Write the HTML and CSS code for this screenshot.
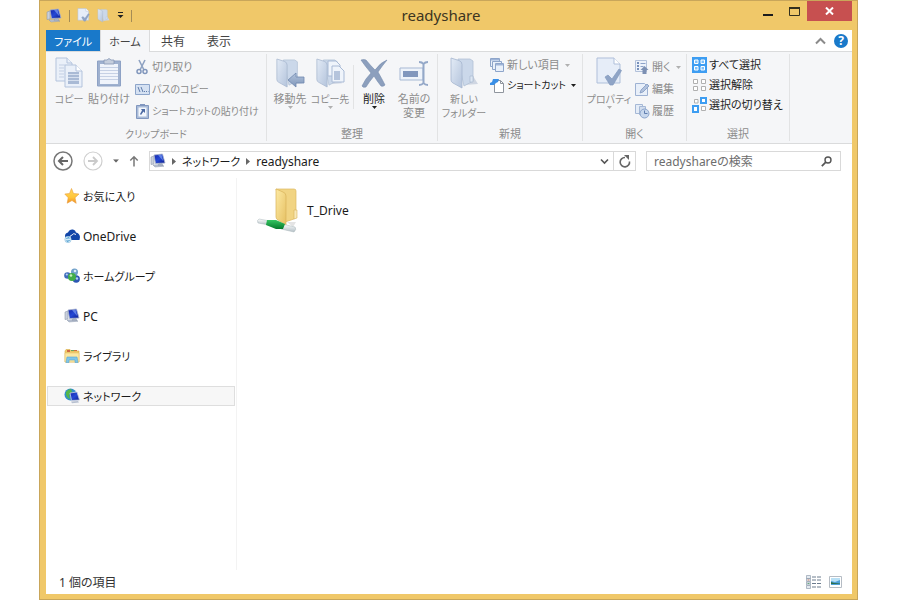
FILE: index.html
```html
<!DOCTYPE html>
<html lang="ja">
<head>
<meta charset="utf-8">
<meta name="viewport" content="width=device-width, initial-scale=1">
<title>readyshare</title>
<link rel="stylesheet" href="styles.css">
</head>
<body>
<svg class="defs" width="0" height="0" aria-hidden="true">
  <defs>
    <linearGradient id="g-screen" x1="0" y1="0" x2="1" y2="1"><stop offset="0" stop-color="#1426a8"/><stop offset=".5" stop-color="#2448d4"/><stop offset="1" stop-color="#0c1c8c"/></linearGradient>
    <linearGradient id="g-pale" x1="0" y1="0" x2="1" y2="1"><stop offset="0" stop-color="#e3ebf6"/><stop offset="1" stop-color="#b4c4dc"/></linearGradient>
    <linearGradient id="g-arrow" x1="0" y1="0" x2="0" y2="1"><stop offset="0" stop-color="#b3c4dd"/><stop offset="1" stop-color="#7f96b9"/></linearGradient>
    <linearGradient id="g-yellow" x1="0" y1="0" x2="1" y2="1"><stop offset="0" stop-color="#fdeaa4"/><stop offset="1" stop-color="#e6c062"/></linearGradient>
    <linearGradient id="g-star" x1="0" y1="0" x2="0" y2="1"><stop offset="0" stop-color="#ffd85c"/><stop offset=".6" stop-color="#ffc63a"/><stop offset="1" stop-color="#f08c28"/></linearGradient>
    <linearGradient id="g-pipe" x1="0" y1="0" x2="0" y2="1"><stop offset="0" stop-color="#ffffff"/><stop offset="1" stop-color="#b4c0c6"/></linearGradient>
    <linearGradient id="g-green" x1="0" y1="0" x2="0" y2="1"><stop offset="0" stop-color="#35c562"/><stop offset="1" stop-color="#057a2c"/></linearGradient>
    <symbol id="pc" viewBox="0 0 16 16">
      <path d="M1 4l3-1v8l-3 .5z" fill="#c9d0dc" stroke="#8d99ad" stroke-width=".6"/>
      <path d="M4 2l8.500-1 2.500 9-9.500.5z" fill="url(#g-screen)" stroke="#a9b4cc" stroke-width=".8"/>
      <path d="M8 2l3.500-.3 1.800 6.500z" fill="#7d9cf0" opacity=".7"/>
      <path d="M9 10.500h3l1 2H8zM3 12l8-.5 3 1.700-9 .8z" fill="#b9c2d2" stroke="#8e9aaf" stroke-width=".5"/>
    </symbol>
    <symbol id="folder-pale" viewBox="0 0 30 32">
      <path d="M16 28l13-1-5-8z" fill="#cfd6e2"/>
      <path d="M9 2h12l3 2v20l-9 5z" fill="#cbd8ea" stroke="#b3c1d6" stroke-width=".8"/>
      <path d="M2 1l8 2.500q3 1 3 4V31l-9-5q-2-1-2-3z" fill="url(#g-pale)" stroke="#a6b6cf" stroke-width=".8"/>
      <path d="M21 19h3v6h-3z" fill="#dce6f3" stroke="#a6b6cf" stroke-width=".6"/>
    </symbol>
    <symbol id="page-check" viewBox="0 0 26 32">
      <path d="M1 1h17l6 6v19H1z" fill="#e6edf8" stroke="#afbfda"/>
      <path d="M18 1v6h6" fill="#fff" stroke="#afbfda"/>
      <path d="M9 20l3-2 4 4 7-10 2.500 1.500L17 28h-3z" fill="#8fa4c6" stroke="#8399bd" stroke-width=".7"/>
    </symbol>
    <symbol id="caret" viewBox="0 0 5 3"><path d="M0 0h5L2.500 3z" fill="currentColor"/></symbol>
  </defs>
</svg>

<div class="window">
  <header class="titlebar">
    <div class="quick">
      <svg width="16" height="16"><use href="#pc"/></svg>
      <span class="quick-line"></span>
      <button class="quick-btn" aria-label="プロパティ"><svg width="13" height="15"><use href="#page-check"/></svg></button>
      <button class="quick-btn" aria-label="新しいフォルダー"><svg width="13" height="15"><use href="#folder-pale"/></svg></button>
      <button class="quick-btn" aria-label="カスタマイズ"><svg width="7" height="7" viewBox="0 0 7 7"><path d="M1 0h5v1H1zM.5 3h6L3.500 6z" fill="#222"/></svg></button>
      <span class="quick-line"></span>
    </div>
    <h1 class="title">readyshare</h1>
    <div class="caption">
      <button class="cap-btn" aria-label="最小化"><svg width="12" height="12" viewBox="0 0 12 12"><path d="M1 9h10v2H1z" fill="#1c1c1c"/></svg></button>
      <button class="cap-btn" aria-label="最大化"><svg width="13" height="12" viewBox="0 0 13 12"><path d="M1.500 2.500h10v8h-10z" fill="none" stroke="#33301f"/><path d="M1 2h11v2H1z" fill="#33301f"/></svg></button>
      <button class="cap-btn close" aria-label="閉じる"><svg width="9" height="8" viewBox="0 0 9 8"><path d="M1 .5l7 7M8 .5l-7 7" stroke="#fff" stroke-width="2"/></svg></button>
    </div>
  </header>

  <div class="client">
    <nav class="tabs">
      <button class="tab file">ファイル</button>
      <button class="tab active">ホーム</button>
      <button class="tab">共有</button>
      <button class="tab">表示</button>
      <span class="tab-tools">
        <button class="icon-btn" aria-label="リボンの最小化"><svg width="11" height="8" viewBox="0 0 11 8"><path d="M1 6.500l4.500-4.500L10 6.500" fill="none" stroke="#8a8a8a" stroke-width="2"/></svg></button>
        <button class="icon-btn help" aria-label="ヘルプ">?</button>
      </span>
    </nav>

    <section class="ribbon">
      <div class="group clip">
        <div class="tools">
          <button class="big"><svg width="28" height="32" viewBox="0 0 28 32"><g stroke="#b3c3dc" fill="#eaf0f9"><path d="M1 1h11l5 5v18H1z"/><path d="M12 1v5h5"/><path d="M10 8h11l6 6v16H10z"/><path d="M21 8v6h6" fill="#fff"/></g><path d="M4 8h6M4 11h5M4 14h5M4 17h5M4 20h5" stroke="#c3cfe3"/><path d="M13 15h11v12H13z" fill="#a9bad5"/><path d="M13 17.500h11M13 20.500h11M13 23.500h11" stroke="#d5dfee"/></svg><span class="kana">コピー</span></button>
          <button class="big"><svg width="26" height="32" viewBox="0 0 26 32"><path d="M1.500 4h23v25h-23z" fill="#9fb1cf" stroke="#8ea2c5"/><path d="M4 7h18v20H4z" fill="#f0f4fb"/><path d="M4 10.500h18M4 13.500h18M4 16.500h18M4 19.500h18M4 22.500h18" stroke="#c6d1e5"/><path d="M8 3h3q2-3 4 0h3v4H8z" fill="#c5cedd" stroke="#8798b5" stroke-width=".8"/></svg><span>貼り付け</span></button>
          <div class="stack wide">
            <button class="small"><svg width="15" height="16" viewBox="0 0 15 16"><path d="M4 1l5 10M10 1L5 11" stroke="#8ea2c2" stroke-width="1.600" fill="none"/><g fill="none" stroke="#8197bc" stroke-width="1.500"><circle cx="4" cy="12.500" r="2"/><circle cx="10" cy="12.500" r="2"/></g></svg>切り取り</button>
            <button class="small kana"><svg width="15" height="16" viewBox="0 0 15 16"><path d="M.5 3.500h14v10H.5z" fill="#d5e1f2" stroke="#8da5ca"/><path d="M3 6l2 5M6 6l2 5M9 10.500h1M11 10.500h1M13 10.500h.5" stroke="#5f7cab" fill="none"/></svg>パスのコピー</button>
            <button class="small kana"><svg width="15" height="16" viewBox="0 0 15 16"><path d="M1.500 2.500h12v13h-12z" fill="#a9bbd8" stroke="#8197bf"/><path d="M3.500 4.500h8v9h-8z" fill="#f3f7fd"/><path d="M5 1h5v2H5z" fill="#8197bf"/><path d="M6 6h4v4L8.500 8.500 6 12l-1-1 2-3.500z" fill="#4c69a3"/></svg>ショートカットの貼り付け</button>
          </div>
        </div>
        <div class="caption-text kana">クリップボード</div>
      </div>

      <div class="group organize">
        <div class="tools">
          <button class="big"><svg width="30" height="32" viewBox="0 0 30 32"><use href="#folder-pale" width="28" height="32"/><path d="M13 23l8-7v4h8v6h-8v4z" fill="url(#g-arrow)" stroke="#7088ae" stroke-width=".8"/></svg><span>移動先</span><svg class="drop" width="5" height="3"><use href="#caret"/></svg></button>
          <button class="big"><svg width="30" height="32" viewBox="0 0 30 32"><use href="#folder-pale" width="28" height="32"/><g fill="#eff4fb" stroke="#a9bad5"><path d="M13 4h8l4 4v11H13z"/><path d="M17 9h7l5 5v11H17z"/></g><path d="M19 14h6v9h-6z" fill="#b5c4dc"/></svg><span class="kana">コピー先</span><svg class="drop" width="5" height="3"><use href="#caret"/></svg></button>
          <span class="split"></span>
          <button class="big on"><svg width="30" height="32" viewBox="0 0 30 32"><path d="M2 3q3-1 5 0 4 5 9 10 6-8 12-10-5 6-9 12 4 7 7 13-2 2-4 1-4-5-7-10-5 6-8 11-3 1-4-1 3-7 9-13Q6 9 2 3z" fill="#8c9fbd" stroke="#768bac" stroke-width=".6"/></svg><span>削除</span><svg class="drop" width="5" height="3"><use href="#caret"/></svg></button>
          <button class="big"><svg width="30" height="32" viewBox="0 0 30 32"><path d="M1 11h23v12H1z" fill="#eef3fa" stroke="#a7b9d4"/><path d="M4 14h15v6H4z" fill="#8197bd"/><path d="M20 5q3 0 4.500 2Q26 5 29 5M24.500 6v21M20 28q3 0 4.500-2 1.500 2 4.500 2" fill="none" stroke="#94a8c8" stroke-width="2"/></svg><span>名前の<br>変更</span></button>
        </div>
        <div class="caption-text">整理</div>
      </div>

      <div class="group create">
        <div class="tools">
          <button class="big"><svg width="30" height="32"><use href="#folder-pale"/></svg><span class="kana">新しい<br>フォルダー</span></button>
          <div class="stack tight">
            <button class="small"><svg width="15" height="16" viewBox="0 0 15 16"><g fill="#e9f0fa" stroke="#8ea5ca"><path d="M.5 1.500h9v8h-9z"/><path d="M2.500 4.500h9v8h-9z"/><path d="M5.500 6.500h8v8h-8z"/></g><path d="M1 2h8v1.500H1zM6 7h7v1.500H6z" fill="#9eb4d8"/></svg>新しい項目<svg class="drop" width="5" height="3"><use href="#caret"/></svg></button>
            <button class="small on kana"><svg width="15" height="16" viewBox="0 0 15 16"><path d="M4.500 3.500h6l3 3v9h-9z" fill="#fff" stroke="#8f959e"/><path d="M10.500 3.500v3h3" fill="none" stroke="#8f959e"/><path d="M0 6l2-1 1-3h6L8 5 6 6 4 8H0z" fill="#3a8fe6"/></svg>ショートカット<svg class="drop" width="5" height="3"><use href="#caret"/></svg></button>
          </div>
        </div>
        <div class="caption-text">新規</div>
      </div>

      <div class="group open">
        <div class="tools">
          <button class="big"><svg width="26" height="32"><use href="#page-check"/></svg><span class="kana">プロパティ</span><svg class="drop" width="5" height="3"><use href="#caret"/></svg></button>
          <div class="stack wide">
            <button class="small"><svg width="15" height="16" viewBox="0 0 15 16"><path d="M.5 1.500h11v11H.5z" fill="#edf2fa" stroke="#b2c1da"/><path d="M2 3h2v2H2zM2 6h2v2H2zM2 9h2v2H2z" fill="#7790bb"/><path d="M5.500 4.500h5M5.500 7.500h3" stroke="#8ca2c8"/><path d="M5.500 11L9.500 7l4 4h-2v4h-4v-4z" fill="#7c90b3"/></svg>開く<svg class="drop" width="5" height="3"><use href="#caret"/></svg></button>
            <button class="small"><svg width="15" height="16" viewBox="0 0 15 16"><path d="M.5 2.500h9l3 3v9H.5z" fill="#e8eff9" stroke="#9eb2d3"/><path d="M5 12l1-3 6-6 2 2-6 6z" fill="#b1c2dd" stroke="#8299c0" stroke-width=".8"/></svg>編集</button>
            <button class="small"><svg width="15" height="16" viewBox="0 0 15 16"><path d="M.5 1.500h7v9h-7z" fill="#e4ecf7" stroke="#a5b8d6"/><path d="M4.500 3.500h6v8h-6z" fill="#d1ddee" stroke="#a5b8d6"/><circle cx="9.500" cy="10.500" r="4.500" fill="#c7d7ed" stroke="#8ba4cc"/><path d="M9.500 7.500v3h3" fill="none" stroke="#5f7dae"/></svg>履歴</button>
          </div>
        </div>
        <div class="caption-text">開く</div>
      </div>

      <div class="group select">
        <div class="tools">
          <div class="stack tight">
            <button class="small on"><svg width="15" height="16" viewBox="0 0 15 16"><path d="M0 0h15v16H0z" fill="#3d9df2"/><path d="M2.500 3h3.500v3.500H2.500zM9 3h3.500v3.500H9zM2.500 9.500h3.500v3.500H2.500zM9 9.500h3.500v3.500H9z" fill="#7fc0f8" stroke="#fff"/></svg>すべて選択</button>
            <button class="small on"><svg width="15" height="16" viewBox="0 0 15 16"><path d="M1.500 2.500h4v4h-4zM9.500 2.500h4v4h-4zM1.500 9.500h4v4h-4zM9.500 9.500h4v4h-4z" fill="#fff" stroke="#b0b0b0"/></svg>選択解除</button>
            <button class="small on"><svg width="15" height="16" viewBox="0 0 15 16"><path d="M8 0h7v7H8zM0 8h7v8H0z" fill="#3d9df2"/><path d="M10 2h3v3h-3zM2 10h3v4H2z" fill="#fff"/><path d="M2.500 2.500h3.500v3.500H2.500zM9.500 9.500h4v4h-4z" fill="#fff" stroke="#b0b0b0"/></svg>選択の切り替え</button>
          </div>
        </div>
        <div class="caption-text">選択</div>
      </div>
    </section>

    <div class="navrow">
      <button class="icon-btn" aria-label="戻る"><svg width="20" height="20" viewBox="0 0 20 20"><circle cx="10" cy="10" r="9" fill="none" stroke="#777" stroke-width="1.500"/><path d="M15 10H6M10 6l-4 4 4 4" fill="none" stroke="#666" stroke-width="2"/></svg></button>
      <button class="icon-btn" aria-label="進む"><svg width="20" height="20" viewBox="0 0 20 20"><circle cx="10" cy="10" r="9" fill="none" stroke="#cfcfcf" stroke-width="1.200"/><path d="M5 10h9M10 6l4 4-4 4" fill="none" stroke="#cacaca" stroke-width="1.800"/></svg></button>
      <button class="icon-btn recent" aria-label="最近表示した場所"><svg width="6" height="4" viewBox="0 0 5 3"><use href="#caret"/></svg></button>
      <button class="icon-btn" aria-label="上へ"><svg width="10" height="12" viewBox="0 0 9 12"><path d="M4.500 11.500V2M.8 5.500L4.500 1.800l3.700 3.700" fill="none" stroke="#777" stroke-width="1.500"/></svg></button>
      <div class="address">
        <svg width="16" height="16"><use href="#pc"/></svg>
        <svg class="crumb-arrow" width="4" height="7" viewBox="0 0 4 7"><path d="M0 0l4 3.500L0 7z" fill="#666"/></svg>
        <a class="crumb kana" href="#network">ネットワーク</a>
        <svg class="crumb-arrow" width="4" height="7" viewBox="0 0 4 7"><path d="M0 0l4 3.500L0 7z" fill="#666"/></svg>
        <a class="crumb" href="#readyshare">readyshare</a>
        <button class="icon-btn history" aria-label="以前の場所"><svg width="9" height="7" viewBox="0 0 9 7"><path d="M1 1.500L4.500 5 8 1.500" fill="none" stroke="#555" stroke-width="1.600"/></svg></button>
        <button class="icon-btn refresh" aria-label="最新の情報に更新"><svg width="12" height="13" viewBox="0 0 12 13"><path d="M10.500 6.500A4.700 4.700 0 1 1 6 2.500" fill="none" stroke="#666" stroke-width="1.600"/><path d="M5 0h5v5z" fill="#666"/></svg></button>
      </div>
      <div class="search">
        <input class="search-input" type="text" aria-label="検索" placeholder="readyshareの検索">
        <svg width="11" height="11" viewBox="0 0 11 11"><circle cx="7" cy="4" r="3" fill="none" stroke="#555" stroke-width="1.400"/><path d="M4.800 6.200L.8 10.200" stroke="#555" stroke-width="1.800"/></svg>
      </div>
    </div>

    <main class="content">
      <nav class="sidebar">
        <a class="place kana" href="#favorites"><svg width="16" height="16" viewBox="0 0 16 16"><path d="M7.500.5l2 5 5.500.5-4 3.700 1.200 5.600L8 12.500l-4.800 2.700 1-5.500L.8 6l4.700-.5z" fill="url(#g-star)" stroke="#e9a03c" stroke-width=".6"/></svg>お気に入り</a>
        <a class="place" href="#onedrive"><svg width="16" height="16" viewBox="0 0 16 16"><path d="M1 8q0-3 3-3.500Q5.500 1 9 1.500q2.500.5 3 3 3.500.5 4 4.500l-.5 3H3q-2-1-2-4z" fill="#1145a8"/><path d="M6 11q-1-3.500 2-4 1.500-2.500 4-.5" fill="none" stroke="#fff" stroke-width=".9"/><circle cx="4" cy="11.500" r="3.200" fill="#d5ebf8" stroke="#8bbedd" stroke-width=".6"/><path d="M2.500 11a2 2 0 0 1 3-.8M5.500 12a2 2 0 0 1-3 .8" stroke="#2989c5" fill="none"/></svg>OneDrive</a>
        <a class="place kana" href="#homegroup"><svg width="16" height="16" viewBox="0 0 16 16"><circle cx="10.500" cy="4" r="3.500" fill="#6e9fc9"/><circle cx="3.500" cy="7.500" r="3.300" fill="#3e6bbc"/><circle cx="12.200" cy="11" r="3.700" fill="#2c57b3"/><circle cx="8" cy="9" r="4" fill="#42ad49"/><circle cx="2.800" cy="6.500" r="1.100" fill="#bdd4f4"/><circle cx="11" cy="3" r="1.300" fill="#dcecf8"/><circle cx="7" cy="7.500" r="1.300" fill="#c6f0bd"/><circle cx="13" cy="10.500" r="1.200" fill="#b3cdf6"/></svg>ホームグループ</a>
        <a class="place" href="#pc-root"><svg width="16" height="16"><use href="#pc"/></svg>PC</a>
        <a class="place kana" href="#library"><svg width="16" height="16" viewBox="0 0 16 16"><path d="M1 3l1-1.500h4L7 3h8v11H1z" fill="#f0cb68" stroke="#d9ac49" stroke-width=".6"/><path d="M3 2h3v2H3zM10 2h3v1h-3z" fill="#cf6a43"/><path d="M7 2h3v1H7z" fill="#6ca45b"/><path d="M1 5h14v9H1z" fill="#fbe7a1" stroke="#e5c46d" stroke-width=".6"/><path d="M3 9h10l1 5.500h-3V12H5v2.500H2z" fill="#7ec5e8" stroke="#59a6d2" stroke-width=".6"/></svg>ライブラリ</a>
        <a class="place kana current" href="#network"><svg width="16" height="16" viewBox="0 0 16 16"><circle cx="6.500" cy="6.500" r="6" fill="#338fc9"/><path d="M2 4q2-3 5-3l1 3-3 3 1 4q-3-1-4-4z" fill="#54b74a"/><path d="M6 5l7-1 2.500 8-8 .5z" fill="url(#g-screen)" stroke="#c7cfdf" stroke-width=".8"/><path d="M7 13.500l7-.5 1 1.500-7 .8z" fill="#b7c0d0"/></svg>ネットワーク</a>
      </nav>
      <section class="files">
        <a class="file-item" href="#t_drive">
          <svg width="42" height="48" viewBox="0 0 42 48">
            <path d="M30 36h9l-3 5z" fill="#e4e4e4"/>
            <path d="M19 3h18q2 0 2 2v25q0 2-2 3l-9 3z" fill="#f1d483" stroke="#dcb962" stroke-width=".7"/>
            <path d="M19 3l7 3q3 1 3 4v29l-8-5q-2-1-2-3z" fill="url(#g-yellow)" stroke="#d9b35a" stroke-width=".7"/>
            <path d="M37 24h3v8l-3 1z" fill="#f8e9b8" stroke="#d9b35a" stroke-width=".6"/>
            <path d="M2 33l11 2-1 4-11-2Q-.500 34 2 33z" fill="url(#g-pipe)" stroke="#a9b6ba" stroke-width=".5"/>
            <path d="M25 38l13 3q2 2-1 5l-13-3z" fill="url(#g-pipe)" stroke="#a9b6ba" stroke-width=".5"/>
            <path d="M10 34l9 0 9 4-2 5h-7L9 39z" fill="url(#g-green)"/>
          </svg>T_Drive</a>
      </section>
    </main>

    <footer class="status">
      <span>1 個の項目</span>
      <span class="views">
        <button class="icon-btn" aria-label="詳細"><svg width="16" height="14" viewBox="0 0 16 14"><g fill="#e4eaf0" stroke="#93a1b0" stroke-width=".7"><path d="M.5.5h4v3h-4zM.5 3.500h4v3h-4zM.5 7h4v3h-4zM.5 10.500h4v3h-4z"/></g><path d="M1.500 5h2" stroke="#c57d68"/><path d="M1.500 8.500h2" stroke="#69a67f"/><path d="M6 2h4M11 2h4M6 5h4M11 5h4M6 8.500h4M11 8.500h4M6 12h4M11 12h4" stroke="#6c7c8e"/></svg></button>
        <button class="icon-btn" aria-label="大アイコン"><svg width="13" height="12" viewBox="0 0 13 12"><path d="M.5.5h12v11H.5z" fill="#fff" stroke="#b5bcc4"/><path d="M2 2h9v7H2z" fill="#4fa0d8"/><path d="M2 2h9v2L6 6 2 5z" fill="#b9e0f5"/><path d="M2 6l3 1 6 .5V8H2z" fill="#2b6f4a"/></svg></button>
      </span>
    </footer>
  </div>
</div>
</body>
</html>
```
FILE: styles.css
```css
* {
  box-sizing: border-box;
}

body {
  margin: 0;
  background: #fff;
  color: #1a1a1a;
  font-family: "Noto Sans", "Noto Sans CJK JP", sans-serif;
  font-size: 12px;
  font-feature-settings: "palt";
}

button,
input {
  margin: 0;
  padding: 0;
  border: 0;
  background: none;
  color: inherit;
  font: inherit;
  font-feature-settings: inherit;
}

a {
  color: inherit;
  text-decoration: none;
}

svg {
  display: block;
  flex: none;
}

.defs {
  position: absolute;
}

.kana {
  font-size: 11px;
}

.window {
  display: flex;
  flex-direction: column;
  min-height: 100vh;
  margin: 0 42px 0 39px;
  padding: 0 5px 5px 6px;
  border: 1px solid #c9a65a;
  background: #f0c869;
}

/* Title bar */
.titlebar {
  display: grid;
  grid-template-columns: 1fr auto 1fr;
  height: 29px;
}

.quick {
  display: flex;
  align-items: center;
  gap: 7px;
}

.quick-line {
  width: 1px;
  height: 12px;
  background: #a58c55;
}

.quick-btn {
  display: flex;
}

.title {
  margin: 0;
  padding-right: 16px;
  font-size: 15px;
  font-weight: 400;
  line-height: 29px;
  color: #3d3522;
}

.caption {
  display: flex;
  justify-content: flex-end;
  align-items: flex-start;
}

.cap-btn {
  display: flex;
  align-items: center;
  justify-content: center;
  width: 26px;
  height: 20px;
}

.close {
  width: 45px;
  background: #c75050;
}

/* Tabs */
.client {
  display: flex;
  flex: 1;
  flex-direction: column;
  background: #fff;
}

.tabs {
  display: flex;
  height: 22px;
  border-bottom: 1px solid #dadbdc;
}

.tab {
  height: 22px;
  padding: 0 11px;
  color: #444;
}

.file {
  width: 54px;
  height: 21px;
  padding: 0;
  background: #1979ca;
  color: #fff;
  font-size: 11px;
}

.active {
  width: 50px;
  padding: 0;
  border: 1px solid #dadbdc;
  border-width: 0 1px;
  background: #f5f6f8;
  font-size: 11px;
}

.tab-tools {
  display: flex;
  align-items: center;
  gap: 8px;
  margin-left: auto;
  padding-right: 4px;
}

.icon-btn {
  display: flex;
  align-items: center;
  justify-content: center;
}

.help {
  width: 14px;
  height: 14px;
  border-radius: 50%;
  background: #1979ca;
  color: #fff;
  font-size: 12px;
  font-weight: 700;
  line-height: 14px;
}

/* Ribbon */
.ribbon {
  display: flex;
  height: 92px;
  border-bottom: 1px solid #dadbdc;
  background: #f5f6f8;
  color: #8c8c8c;
  font-size: 11px;
  line-height: 14px;
}

.ribbon .kana {
  font-size: 10px;
}

.group {
  display: flex;
  flex: none;
  flex-direction: column;
  margin: 2px 0;
  border-right: 1px solid #e2e3e4;
}

.clip {
  width: 221px;
}

.organize {
  width: 171px;
}

.create {
  width: 145px;
}

.open {
  width: 104px;
}

.select {
  width: 103px;
}

.tools {
  display: flex;
  flex: 1;
  align-items: flex-start;
  padding: 3px 0 0 3px;
}

.select .tools {
  padding-left: 2px;
}

.caption-text {
  height: 14px;
  text-align: center;
}

.big {
  display: flex;
  flex: none;
  flex-direction: column;
  align-items: center;
  width: 40px;
  white-space: nowrap;
}

.big span {
  margin-top: 3px;
}

.drop {
  color: #b0b0b0;
}

.on,
.on .drop {
  color: #1e1e1e;
}

.split {
  width: 1px;
  height: 44px;
  margin: 8px 0 0 3px;
  background: #e2e3e4;
}

.create .big,
.open .big {
  width: 46px;
}

.stack {
  display: flex;
  flex-direction: column;
  padding-left: 6px;
}

.create .stack,
.open .stack,
.select .stack {
  padding-left: 3px;
}

.wide {
  gap: 6px;
  padding-top: 2px;
}

.tight {
  gap: 4px;
}

.small {
  display: flex;
  align-items: center;
  gap: 2px;
  height: 16px;
  white-space: nowrap;
}

.small .drop {
  margin-left: 3px;
}

/* Navigation row */
.navrow {
  display: flex;
  align-items: center;
  gap: 10px;
  height: 34px;
  padding: 0 11px 0 7px;
}

.recent {
  color: #666;
}

.address {
  display: flex;
  flex: 1;
  align-items: center;
  height: 20px;
  border: 1px solid #d9d9d9;
}

.crumb-arrow {
  margin: 0 6px;
}

.history {
  width: 18px;
  margin-left: auto;
}

.refresh {
  width: 22px;
  height: 18px;
  border-left: 1px solid #d9d9d9;
}

.search {
  display: flex;
  flex: 0 1 195px;
  align-items: center;
  min-width: 0;
  height: 20px;
  padding: 0 8px 0 7px;
  border: 1px solid #d9d9d9;
}

.search-input {
  flex: 1;
  min-width: 0;
  height: 18px;
}

.search-input::placeholder {
  color: #6d6d6d;
  opacity: 1;
}

/* Content */
.content {
  display: flex;
  flex: 1;
}

.sidebar {
  display: flex;
  flex: none;
  flex-direction: column;
  gap: 20px;
  width: 191px;
  padding: 8px 1px;
  border-right: 1px solid #f3f3f3;
}

.place {
  display: flex;
  align-items: center;
  gap: 3px;
  height: 20px;
  padding-left: 16px;
  border: 1px solid transparent;
}

.current {
  border-color: #dedede;
  background: #f7f7f7;
}

.files {
  flex: 1;
  padding: 8px 20px;
}

.file-item {
  display: inline-flex;
  align-items: center;
  gap: 8px;
}

/* Status bar */
.status {
  display: flex;
  align-items: center;
  justify-content: space-between;
  height: 24px;
  padding: 0 10px 0 13px;
  color: #333;
}

.views {
  display: flex;
  align-items: center;
  gap: 7px;
}
```
